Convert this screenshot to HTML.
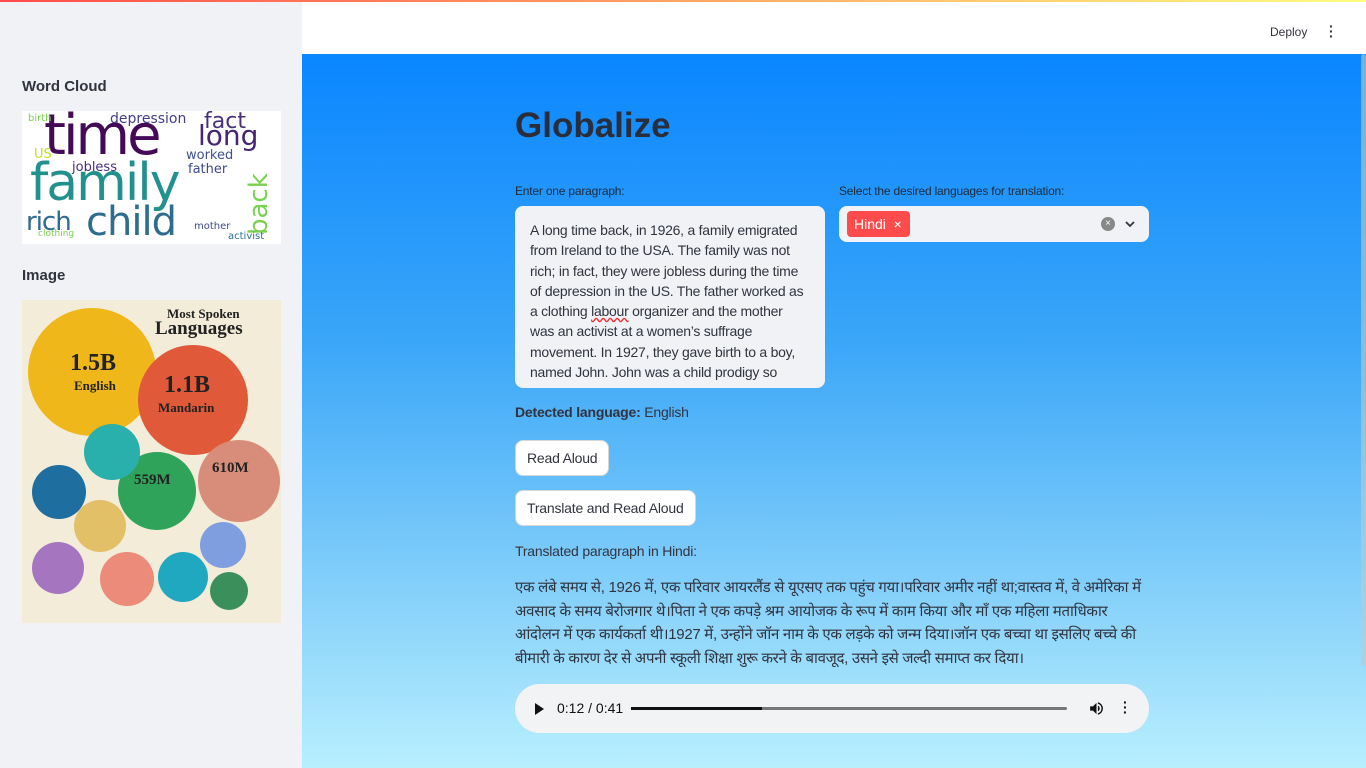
<!DOCTYPE html>
<html><head><meta charset="utf-8"><style>
*{box-sizing:border-box;margin:0;padding:0}
body{width:1366px;height:768px;overflow:hidden;font-family:"Liberation Sans","Noto Sans CJK SC",sans-serif;position:relative;background:#fff}
.topbar{position:absolute;top:0;left:0;width:1366px;height:2px;background:linear-gradient(90deg,#ff4b4b,#fffd80)}
.side{position:absolute;left:0;top:0;width:302px;height:768px;background:#f0f2f6}
.header{position:absolute;left:302px;top:2px;right:0;height:52px;background:#fff}
.main{position:absolute;left:302px;top:54px;right:0;bottom:0;background:linear-gradient(180deg,#0a86ff 0%,#3aa6f8 40%,#8fd6fa 80%,#b8efff 100%)}
h3{font-size:15px;font-weight:bold;color:#31333f;position:absolute;left:22px}
.abs{position:absolute}
.lbl{font-size:12px;color:#1d2a3a;letter-spacing:-0.2px}
.ta{background:#f0f2f6;border-radius:8px;font-size:14px;line-height:20.3px;color:#31333f;padding:14px 15px;letter-spacing:-0.25px}
.btn{background:#fff;border:1px solid #d6d6d9;border-radius:8px;font-size:14px;color:#31333f;padding:0 11px;height:36px;line-height:34px;letter-spacing:-0.2px}
.hi{font-family:"Liberation Sans","Noto Sans CJK SC","DejaVu Sans",sans-serif;font-size:15px;line-height:23.5px;color:#31333f;letter-spacing:-0.3px}
</style></head><body>
<div class="side">
<h3 style="top:78px">Word Cloud</h3>
<div class="abs" style="left:22px;top:111px;width:259px;height:133px;background:#fff;overflow:hidden;font-family:'DejaVu Sans',sans-serif">
<span class="abs" style="left:22px;top:-8px;font-size:56px;color:#440a57;letter-spacing:-3px">time</span>
<span class="abs" style="left:8px;top:42px;font-size:52px;color:#22908c;letter-spacing:-2px">family</span>
<span class="abs" style="left:64px;top:88px;font-size:40px;color:#2e6d8e;letter-spacing:-1px">child</span>
<span class="abs" style="left:4px;top:96px;font-size:26px;color:#306a8e;letter-spacing:-1px">rich</span>
<span class="abs" style="left:176px;top:8px;font-size:28px;color:#482475">long</span>
<span class="abs" style="left:182px;top:-2px;font-size:22px;color:#46307e">fact</span>
<span class="abs" style="left:88px;top:0px;font-size:14px;color:#433e85">depression</span>
<span class="abs" style="left:164px;top:37px;font-size:13px;color:#3b518b">worked</span>
<span class="abs" style="left:166px;top:51px;font-size:13px;color:#3e4989">father</span>
<span class="abs" style="left:50px;top:49px;font-size:13px;color:#472d7b">jobless</span>
<span class="abs" style="left:222px;top:124px;font-size:26px;color:#7ad151;transform:rotate(-90deg);transform-origin:left top">back</span>
<span class="abs" style="left:12px;top:36px;font-size:13px;color:#c0df25">US</span>
<span class="abs" style="left:172px;top:110px;font-size:10px;color:#3e4989">mother</span>
<span class="abs" style="left:206px;top:120px;font-size:10px;color:#2c728e">activist</span>
<span class="abs" style="left:16px;top:118px;font-size:9px;color:#7ad151">clothing</span>
<span class="abs" style="left:6px;top:2px;font-size:10px;color:#7ad151">birth</span>
</div>
<h3 style="top:267px">Image</h3>
<div class="abs" style="left:22px;top:300px;width:259px;height:323px;background:#f3ecd9;overflow:hidden;font-family:'Liberation Serif',serif">
<div class="abs" style="left:6px;top:8px;width:128px;height:128px;border-radius:50%;background:#efb71a"></div>
<div class="abs" style="left:116px;top:45px;width:110px;height:110px;border-radius:50%;background:#e05a3a"></div>
<div class="abs" style="left:176px;top:140px;width:82px;height:82px;border-radius:50%;background:#d88d7a"></div>
<div class="abs" style="left:96px;top:152px;width:78px;height:78px;border-radius:50%;background:#2fa35a"></div>
<div class="abs" style="left:62px;top:124px;width:56px;height:56px;border-radius:50%;background:#2ab0ac"></div>
<div class="abs" style="left:10px;top:165px;width:54px;height:54px;border-radius:50%;background:#1e6ea0"></div>
<div class="abs" style="left:52px;top:200px;width:52px;height:52px;border-radius:50%;background:#e2c068"></div>
<div class="abs" style="left:10px;top:242px;width:52px;height:52px;border-radius:50%;background:#a675c0"></div>
<div class="abs" style="left:78px;top:252px;width:54px;height:54px;border-radius:50%;background:#ec8b7a"></div>
<div class="abs" style="left:136px;top:252px;width:50px;height:50px;border-radius:50%;background:#20a8c0"></div>
<div class="abs" style="left:178px;top:222px;width:46px;height:46px;border-radius:50%;background:#7f9ee0"></div>
<div class="abs" style="left:188px;top:272px;width:38px;height:38px;border-radius:50%;background:#3b8f5a"></div>
<span class="abs" style="left:145px;top:6px;font-size:13px;font-weight:bold;color:#222">Most Spoken</span>
<span class="abs" style="left:133px;top:18px;font-size:19px;font-weight:bold;color:#222">Languages</span>
<span class="abs" style="left:48px;top:50px;font-size:24px;font-weight:bold;color:#222">1.5B</span>
<span class="abs" style="left:52px;top:78px;font-size:13px;font-weight:bold;color:#222">English</span>
<span class="abs" style="left:142px;top:72px;font-size:24px;font-weight:bold;color:#222">1.1B</span>
<span class="abs" style="left:136px;top:100px;font-size:13px;font-weight:bold;color:#222">Mandarin</span>
<span class="abs" style="left:190px;top:160px;font-size:15px;font-weight:bold;color:#222">610M</span>
<span class="abs" style="left:112px;top:172px;font-size:15px;font-weight:bold;color:#222">559M</span>
</div>
</div>
<div class="topbar"></div>
<div class="header"><span class="abs" style="left:968px;top:23px;font-size:12px;color:#31333f">Deploy</span>
<span class="abs" style="left:1027px;top:22px;font-size:14px;color:#31333f;font-weight:bold;line-height:5px">·<br>·<br>·</span></div>
<div class="main">
<div class="abs" style="left:213px;top:52px;font-size:35px;font-weight:bold;color:#2a2e3a">Globalize</div>
<div class="abs lbl" style="left:213px;top:130px">Enter one paragraph:</div>
<div class="abs lbl" style="left:537px;top:130px">Select the desired languages for translation:</div>
<div class="abs ta" style="left:213px;top:152px;width:310px;height:182px;overflow:hidden">A long time back, in 1926, a family emigrated from Ireland to the USA. The family was not rich; in fact, they were jobless during the time of depression in the US. The father worked as a clothing <u style="text-decoration-color:#e33;text-decoration-style:wavy">labour</u> organizer and the mother was an activist at a women’s suffrage movement. In 1927, they gave birth to a boy, named John. John was a child prodigy so</div>
<div class="abs" style="left:537px;top:152px;width:310px;height:36px;background:#f0f2f6;border-radius:8px">
<div class="abs" style="left:8px;top:5px;width:63px;height:26px;background:#ff4b4b;border-radius:4px;color:#fff;font-size:14px;line-height:26px;padding-left:7px">Hindi &nbsp;×</div>
<div class="abs" style="left:262px;top:11px;width:14px;height:14px;border-radius:50%;background:#888;color:#fff;font-size:10px;line-height:14px;text-align:center">×</div>
<svg class="abs" style="left:286px;top:14px" width="10" height="8" viewBox="0 0 10 8"><path d="M1 2l4 4 4-4" stroke="#31333f" stroke-width="1.8" fill="none"/></svg>
</div>
<div class="abs" style="left:213px;top:350px;font-size:14px;color:#31333f;letter-spacing:-0.2px"><b>Detected language:</b> English</div>
<div class="abs btn" style="left:213px;top:386px">Read Aloud</div>
<div class="abs btn" style="left:213px;top:436px">Translate and Read Aloud</div>
<div class="abs" style="left:213px;top:489px;font-size:14px;color:#31333f;letter-spacing:-0.2px">Translated paragraph in Hindi:</div>
<div class="abs hi" style="left:213px;top:522px;width:630px">एक लंबे समय से, 1926 में, एक परिवार आयरलैंड से यूएसए तक पहुंच गया।परिवार अमीर नहीं था;वास्तव में, वे अमेरिका में अवसाद के समय बेरोजगार थे।पिता ने एक कपड़े श्रम आयोजक के रूप में काम किया और माँ एक महिला मताधिकार आंदोलन में एक कार्यकर्ता थी।1927 में, उन्होंने जॉन नाम के एक लड़के को जन्म दिया।जॉन एक बच्चा था इसलिए बच्चे की बीमारी के कारण देर से अपनी स्कूली शिक्षा शुरू करने के बावजूद, उसने इसे जल्दी समाप्त कर दिया।</div>
<div class="abs" style="left:213px;top:630px;width:634px;height:49px;background:#f1f3f4;border-radius:25px">
<div class="abs" style="left:20px;top:19px;width:0;height:0;border-left:9px solid #111;border-top:6px solid transparent;border-bottom:6px solid transparent"></div>
<span class="abs" style="left:42px;top:16px;font-size:14px;color:#111">0:12 / 0:41</span>
<div class="abs" style="left:116px;top:23px;width:436px;height:3px;background:#777;border-radius:2px"><div style="width:131px;height:3px;background:#111"></div></div>
<svg class="abs" style="left:573px;top:16px" width="17" height="17" viewBox="0 0 24 24"><path d="M3 9v6h4l5 5V4L7 9H3z M16.5 12A4.5 4.5 0 0 0 14 8v8a4.5 4.5 0 0 0 2.5-4z M14 3.2v2.1a7 7 0 0 1 0 13.4v2.1a9 9 0 0 0 0-17.6z" fill="#111"/></svg>
<span class="abs" style="left:608px;top:16px;font-size:14px;color:#111;font-weight:bold;line-height:5px">·<br>·<br>·</span>
</div>
<div class="abs" style="right:0;top:0;width:5px;height:612px;background:#bcc;opacity:.6;border-radius:3px"></div>
</div>
</body></html>
